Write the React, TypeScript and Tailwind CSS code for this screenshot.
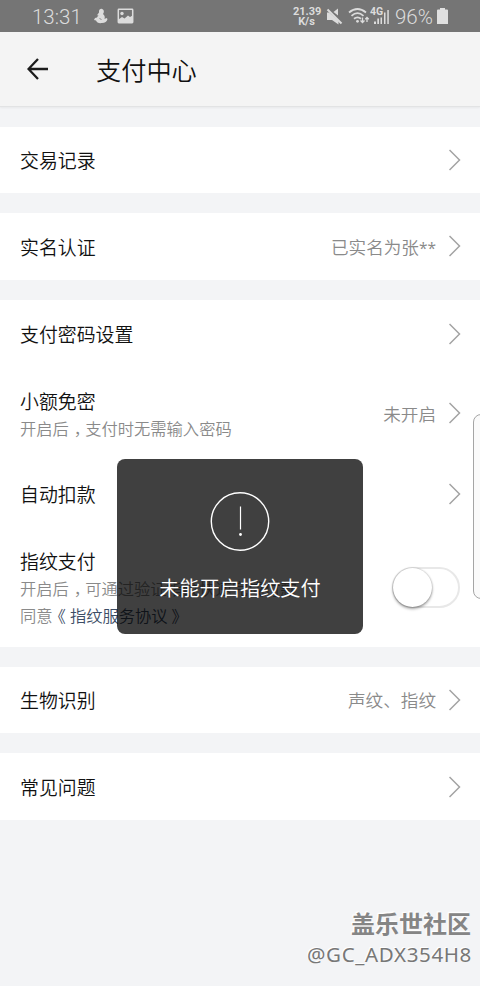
import React from 'react';

const Chevron: React.FC = () => (
    <svg width="12" height="22" viewBox="0 0 12 22" fill="none" stroke="#a3a3a3" strokeWidth="1.5" className="shrink-0">
        <path d="M0.5 1L10.5 11L0.5 21" />
    </svg>
);

const Value: React.FC<{ children: React.ReactNode }> = ({ children }) => (
    <span className="pt-px text-[17.6px] font-[350] text-[#8a8a8a]">{children}</span>
);

interface RowProps {
    title: string;
    value?: React.ReactNode;
}

const Row: React.FC<RowProps> = ({ title, value }) => (
    <div className="flex h-full items-center justify-between pl-5 pr-[19px]">
        <span className="pt-px text-[18.9px] font-[350] text-[#111]">{title}</span>
        <div className="flex items-center gap-[13px]">
            {value && <Value>{value}</Value>}
            <Chevron />
        </div>
    </div>
);

const Comma: React.FC = () => <span className="ml-[5px] -mr-[5px]">，</span>;

const StatusBar: React.FC = () => (
    <div className="flex h-8 items-center bg-[#757575] pl-8 font-[Roboto] text-[#dcdcdc]">
        <span className="w-[50px] pt-[2px] text-[20.5px] leading-8 font-light">13:31</span>
        <svg width="14" height="16" viewBox="0 0 14 16" fill="#dcdcdc" className="ml-[12px]">
            <path d="M5 3.500C5 1.500 6.500 0.500 8 1C10 1.500 10.500 4 9 6C11 7.500 11 9.500 10.500 11L12.500 10L13.500 11C13 13.500 11 15 8 15C5 15.500 2.500 14.500 2 12.500L0 12L1 10L3 9.500L4.500 7L2.800 7.500L5 4.500Z" />
            <path d="M5.500 10L7.500 12" stroke="#757575" strokeWidth="0.8" />
        </svg>
        <svg width="17" height="16" viewBox="0 0 17 16" className="ml-[9px]">
            <rect x="1.300" y="1.300" width="14.400" height="13.400" rx="0.600" fill="none" stroke="#dcdcdc" strokeWidth="1.5" />
            <circle cx="5" cy="5.500" r="1.700" fill="#dcdcdc" />
            <path d="M1.500 11.500L5 9L7.500 10.500L11 7.500L13 9L15.500 7.500V14.500H1.500Z" fill="#dcdcdc" />
        </svg>
        <div className="ml-[159px] w-[27px] pt-px text-center text-[11px] leading-[10px] font-bold">
            <div>21.39</div>
            <div>K/s</div>
        </div>
        <svg width="17" height="17" viewBox="0 0 17 17" fill="#dcdcdc" className="ml-[6px]">
            <path d="M1 4.500H3L12.500 13V16.500L6 12H1Z" />
            <path d="M7.500 4L12 0.500V7.500Z" />
            <path d="M1.500 1.500L15.500 15.500" stroke="#dcdcdc" strokeWidth="2" />
        </svg>
        <svg width="22" height="18" viewBox="0 0 22 18" fill="none" stroke="#dcdcdc" strokeWidth="1.8" className="ml-[5px]">
            <path d="M1 5.500Q9.500 -1.500 18 5.500" />
            <path d="M3.500 8.800Q9.500 3.500 15.500 8.800" />
            <path d="M6 11.800Q9.500 9 13 11.800" />
            <circle cx="9.500" cy="14.300" r="1.400" fill="#dcdcdc" stroke="none" />
            <path d="M14.500 10.500V15.500M12.500 13.500L14.500 15.500L16.500 13.500M19 15V10.500M17.300 12.300L19 10.500L20.700 12.300" strokeWidth="1.300" />
        </svg>
        <div className="relative h-[18px] w-[20px]">
            <span className="absolute top-0 left-0 text-[10.500px] leading-[10px] font-bold">4G</span>
            <svg width="20" height="18" viewBox="0 0 20 18" fill="#dcdcdc">
                <path d="M4 14.500h2v2.500h-2zM7.300 11.500h1.700v5.500h-1.700zM10.500 10.500h1.500v6.500h-1.500zM14 5.500h1.500v11.500h-1.500zM17.300 3h1.500v14h-1.500z" />
            </svg>
        </div>
        <span className="ml-[5px] w-[38px] pt-[2px] text-[20.5px] leading-8 font-light">96%</span>
        <svg width="11" height="16" viewBox="0 0 11 16" fill="#e0e0e0" className="ml-[4px]">
            <path d="M3 0H8V1.500H10Q11 1.500 11 2.500V16H0V2.500Q0 1.500 1 1.500H3Z" />
        </svg>
    </div>
);

const App: React.FC = () => (
    <div className="relative flex h-[986px] w-[480px] flex-col overflow-hidden bg-[#f3f4f6] font-['Noto_Sans_CJK_SC',sans-serif]">
        <StatusBar />
        <header className="flex h-[75px] items-center border-b border-[#e2e3e4] bg-[#f4f4f4] pl-[27px] shadow-xs">
            <svg width="22" height="22" viewBox="0 0 22 22" fill="none" stroke="#1c1c1c" strokeWidth="2.3">
                <path d="M21 11H1.500M11 1L1.500 11L11 21" />
            </svg>
            <h1 className="mt-px ml-[47px] text-[25.2px] font-[350] text-[#111]">支付中心</h1>
        </header>

        <div className="mt-5 flex flex-col gap-5">
            <section className="h-[66px] bg-white">
                <Row title="交易记录" />
            </section>
            <section className="h-[67px] bg-white">
                <Row title="实名认证" value={<>已实名为张<span className="font-['Open_Sans'] text-[15.5px] font-normal">**</span></>} />
            </section>
            <section className="flex h-[347px] flex-col bg-white">
                <div className="h-[67px]">
                    <Row title="支付密码设置" />
                </div>
                <div className="flex h-[93px] items-center justify-between pl-5 pr-[19px]">
                    <div className="pt-px">
                        <div className="text-[18.9px] leading-7 font-[350] text-[#111]">小额免密</div>
                        <div className="text-[16.3px] leading-[27px] font-[350] text-[#8a8a8a]">开启后<Comma />支付时无需输入密码</div>
                    </div>
                    <div className="flex items-center gap-[13px]">
                        <Value>未开启</Value>
                        <Chevron />
                    </div>
                </div>
                <div className="h-[67px]">
                    <Row title="自动扣款" />
                </div>
                <div className="flex h-[120px] items-center justify-between pl-5 pr-5">
                    <div className="pt-px">
                        <div className="text-[18.9px] leading-7 font-[350] text-[#111]">指纹支付</div>
                        <div className="text-[16.3px] leading-[27px] font-[350] text-[#8a8a8a]">开启后<Comma />可通过验证指纹快速完成付款</div>
                        <div className="text-[16.3px] leading-[27px] font-[350] text-[#8a8a8a]">
                            同意
                            <span className="text-[#3c4d66]">
                                <span className="-ml-[3px] mr-1">《</span>指纹服务协议<span className="ml-1">》</span>
                            </span>
                        </div>
                    </div>
                    <div className="h-[41px] w-[68px] rounded-full border-2 border-[#e8e8e8] bg-white">
                        <div className="-mt-px -ml-px h-[39px] w-[39px] rounded-full bg-white shadow-[0_2px_3px_rgba(0,0,0,0.35),0_0_2px_rgba(0,0,0,0.3)]" />
                    </div>
                </div>
            </section>
            <section className="h-[66px] bg-white">
                <Row title="生物识别" value="声纹、指纹" />
            </section>
            <section className="h-[67px] bg-white">
                <Row title="常见问题" />
            </section>
        </div>

        {/* edge panel handle */}
        <div className="absolute top-[414px] -right-4 h-[185px] w-[23px] rounded-lg border border-[#a5a5a5] bg-[#fafafa]" />

        {/* toast */}
        <div className="absolute top-[459px] left-[117px] flex h-[175px] w-[246px] flex-col items-center rounded-lg bg-black/75 pt-8">
            <svg width="60" height="60" viewBox="0 0 60 60" fill="none" stroke="white" strokeWidth="1.4">
                <circle cx="30" cy="30.500" r="28.700" />
                <path d="M30.500 15.500V38.500" strokeWidth="1.200" />
                <circle cx="30.500" cy="43.500" r="1.400" fill="white" stroke="none" />
            </svg>
            <span className="mt-[21px] text-[20.2px] leading-8 font-[350] text-white">未能开启指纹支付</span>
        </div>

        {/* watermark */}
        <div className="absolute right-[9px] bottom-[17px] text-right text-[#777]">
            <div className="mb-px text-[24px] leading-[30px] font-bold text-[#858585] [text-shadow:-1px_-1px_0_#fff,-1px_-1px_2px_#fff]">盖乐世社区</div>
            <div className="-mr-px font-['Noto_Sans'] text-[20.5px] leading-[30px] tracking-[0.65px] [text-shadow:-1px_-1px_0_#fff]">@GC_ADX354H8</div>
        </div>
    </div>
);

export default App;
